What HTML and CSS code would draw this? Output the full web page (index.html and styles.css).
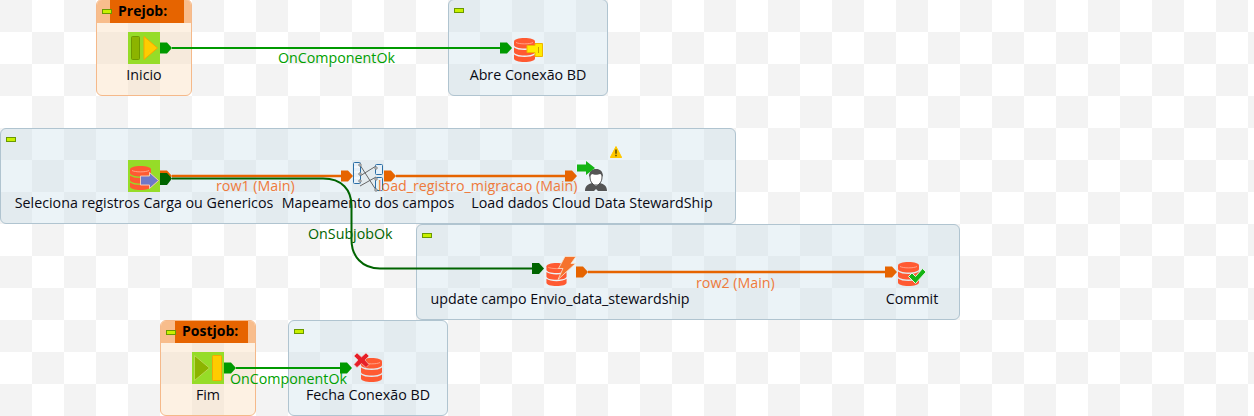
FILE: index.html
```html
<!DOCTYPE html>
<html lang="pt">
<head>
<meta charset="utf-8">
<title>Job</title>
<link rel="stylesheet" href="styles.css">
</head>
<body>
<svg class="defs" width="0" height="0" aria-hidden="true">
  <defs>
    <symbol id="db" viewBox="0 0 21 24">
      <path fill="#ff5a32" d="M0 3.500C0 1.500 4.700 0 10.500 0S21 1.500 21 3.500V7C21 9 16.300 10.500 10.500 10.500S0 9 0 7Z"/>
      <path fill="#ff5a32" d="M0 9.500C2 11.200 6 12 10.500 12S19 11.200 21 9.500V14C21 16 16.300 17.500 10.500 17.500S0 16 0 14Z"/>
      <path fill="#ff5a32" d="M0 16.500C2 18.200 6 19 10.500 19S19 18.200 21 16.500V20.500C21 22.500 16.300 24 10.500 24S0 22.500 0 20.500Z"/>
      <path fill="none" stroke="#ffb49c" stroke-width=".8" d="M2 4.500C5 6.300 16 6.300 19 4.500"/>
    </symbol>
  </defs>
</svg>
<main class="canvas">
  <section class="subjob subjob-special sj-prejob">
    <header class="sj-head"><span class="toggle"></span><span class="sj-title sj-title-pre">Prejob:</span></header>
  </section>
  <section class="subjob sj-abre"><span class="toggle"></span></section>
  <section class="subjob sj-load"><span class="toggle"></span></section>
  <section class="subjob sj-update"><span class="toggle"></span></section>
  <section class="subjob subjob-special sj-postjob">
    <header class="sj-head"><span class="toggle"></span><span class="sj-title sj-title-post">Postjob:</span></header>
  </section>
  <section class="subjob sj-fecha"><span class="toggle"></span></section>

  <div class="node n-inicio">
    <svg class="icon" viewBox="0 0 32 32"><rect width="32" height="32" fill="#96dc28"/><rect x="3.500" y="4.500" width="8" height="23" rx="1" fill="#8cb400" stroke="#6f9a00"/><path d="M16 4.500 29.500 16 16 27.500Z" fill="#ffcc00" stroke="#f5a800" stroke-linejoin="round"/></svg>
    <span class="label">Inicio</span>
  </div>
  <div class="node n-abre">
    <svg class="icon" viewBox="0 0 32 32"><use href="#db" x="2" y="6" width="21" height="24"/><path d="M15 13.500h8v-2h7.500v13H23v-4h-8Z" fill="#ffec00" stroke="#f0b400"/><path d="M26.500 15v6" stroke="#c8a000"/></svg>
    <span class="label">Abre Conexão BD</span>
  </div>
  <div class="node n-seleciona">
    <svg class="icon" viewBox="0 0 32 32"><rect width="32" height="32" fill="#96dc28"/><use href="#db" x="2" y="6" width="21" height="24"/><path d="M12.500 16h9v-3.500l9 8-9 8V25h-9Z" fill="#6e78c8" stroke="#f5c8b4"/></svg>
    <span class="label">Seleciona registros Carga ou Genericos</span>
  </div>
  <div class="node n-mapper">
    <svg class="icon" viewBox="0 0 32 32"><g fill="none" stroke="#666" stroke-width="1"><path d="M8 5 24 30M8 16 24 6M8 26 24 17"/></g><rect x="1.500" y="2.500" width="7" height="21" rx="1" fill="#e6f0f8" stroke="#2a6ea6"/><path d="M2 7h6M2 12h6M2 18h6" stroke="#fff"/><rect x="23.500" y="4.500" width="7" height="10" rx="1" fill="#e6f0f8" stroke="#2a6ea6"/><rect x="23.500" y="17.500" width="7" height="13" rx="1" fill="#e6f0f8" stroke="#2a6ea6"/><g fill="#fff" stroke="#777"><circle cx="8" cy="5" r="1.200"/><circle cx="8" cy="14" r="1.200"/><circle cx="8" cy="21" r="1.200"/><circle cx="24" cy="8" r="1.200"/><circle cx="24" cy="19" r="1.200"/><circle cx="24" cy="30" r="1.200"/></g></svg>
    <span class="label">Mapeamento dos campos</span>
  </div>
  <div class="node n-cloud">
    <svg class="icon" viewBox="0 0 32 32"><path d="M9 31c0-5 3-7 7-8l4 3 4-3c4 1 7 3 7 8H22l-2-2-2 2Z" fill="#555"/><path d="M14 17c0-5 2-7 6-7s6 2 6 7c0 3-1 5-2 6l-2 2h-4l-2-2c-1-1-2-3-2-6Z" fill="#fff" stroke="#555"/><path d="M13 17c0-6 3-8 7-8s7 2 7 8c-1-1-2-3-3-3-2 1-6 1-8 0-1 1-2 2-3 3Z" fill="#555"/><path d="M1 4.500h9V1l9 7-9 7v-3.500H1Z" fill="#14b414"/></svg>
    <span class="label">Load dados Cloud Data StewardShip</span>
    <svg class="warn" viewBox="0 0 12 12"><path d="M6 .500 11.700 11.500H.300Z" fill="#ffc800" stroke="#ffc800" stroke-linejoin="round"/><path d="M6 3.500v4.200M6 8.800v1.400" stroke="#5a4600" stroke-width="1.500"/></svg>
  </div>
  <div class="node n-update">
    <svg class="icon" viewBox="0 0 32 32"><use href="#db" x="2" y="7" width="21" height="23"/><path d="M21 .500H32L27 7.500h4.500L14 23.500 19 12.500H14.500Z" fill="#f5732d" stroke="#f5e6d2" stroke-width=".8"/></svg>
    <span class="label">update campo Envio_data_stewardship</span>
  </div>
  <div class="node n-commit">
    <svg class="icon" viewBox="0 0 32 32"><use href="#db" x="2" y="6" width="21" height="24"/><path d="M12.500 20.500l3.500-3.500 3.500 3.500 7-8 3.500 3.500-10.500 11.500Z" fill="#14b414" stroke="#e6f5e6"/></svg>
    <span class="label">Commit</span>
  </div>
  <div class="node n-fim">
    <svg class="icon" viewBox="0 0 32 32"><rect width="32" height="32" fill="#96dc28"/><path d="M2.500 3.500 17.500 16 2.500 28.500Z" fill="#8cb400" stroke="#b8d850" stroke-linejoin="round"/><rect x="20.500" y="3.500" width="9" height="25" rx="1" fill="#ffcc00" stroke="#f5a800"/></svg>
    <span class="label">Fim</span>
  </div>
  <div class="node n-fecha">
    <svg class="icon" viewBox="0 0 32 32"><use href="#db" x="9" y="6" width="21" height="24"/><path d="M5 1 9.500 5 14 1l3 3-4 4 4 4.500-3 3L9.500 11.500 5 15.500l-3-3L6 8 2 4Z" fill="#e61e28" stroke="#f5d2c8" stroke-width=".6"/></svg>
    <span class="label">Fecha Conexão BD</span>
  </div>

  <svg class="links" width="1254" height="416" viewBox="0 0 1254 416">
    <g class="link-ok">
      <path class="wire" d="M172 48H500"/>
      <path class="tip" d="M160 42.500h7l5 5.500-5 5.500h-7Z"/>
      <path class="tip" d="M500 42.500h7l5 5.500-5 5.500h-7Z"/>
      <path class="wire" d="M236 368H340"/>
      <path class="tip" d="M224 362.500h7l5 5.500-5 5.500h-7Z"/>
      <path class="tip" d="M340 362.500h7l5 5.500-5 5.500h-7Z"/>
    </g>
    <g class="link-row">
      <path class="wire" d="M172 176H341"/>
      <path class="tip" d="M160 170.500h7l5 5.500-5 5.500h-7Z"/>
      <path class="tip" d="M341 170.500h7l5 5.500-5 5.500h-7Z"/>
      <path class="wire" d="M396 176H565"/>
      <path class="tip" d="M384 170.500h7l5 5.500-5 5.500h-7Z"/>
      <path class="tip" d="M565 170.500h7l5 5.500-5 5.500h-7Z"/>
      <path class="wire" d="M588 272H885"/>
      <path class="tip" d="M576 266.500h7l5 5.500-5 5.500h-7Z"/>
      <path class="tip" d="M885 266.500h7l5 5.500-5 5.500h-7Z"/>
    </g>
    <g class="link-subjob">
      <path class="wire" d="M172 178.500H323C342 178.500 351.500 190 351.500 206V240C351.500 256 362 268.500 380 268.500H532"/>
      <path class="tip" d="M160 173h7l5 5.500-5 6.500h-7Z"/>
      <path class="tip" d="M532 263h7l5 5.500-5 5.500h-7Z"/>
    </g>
  </svg>

  <span class="conn conn-ok c-ok1">OnComponentOk</span>
  <span class="conn conn-row c-row1">row1 (Main)</span>
  <span class="conn conn-row c-load">load_registro_migracao (Main)</span>
  <span class="conn conn-sub c-sub">OnSubjobOk</span>
  <span class="conn conn-row c-row2">row2 (Main)</span>
  <span class="conn conn-ok c-ok2">OnComponentOk</span>
</main>
</body>
</html>
```

FILE: styles.css
```css
* { box-sizing: border-box; }
html, body { margin: 0; padding: 0; height: 100%; overflow: hidden; }
body { font-family: "Open Sans", "Noto Sans", sans-serif; font-size: 14.25px; color: #0a0a14; }
.defs { position: absolute; }

.canvas {
  position: relative;
  width: 1254px;
  height: 416px;
  overflow: hidden;
  background: conic-gradient(#fff 25%, #f3f3f3 0 50%, #fff 0 75%, #f3f3f3 0) 0 0 / 64px 64px;
}

.subjob {
  position: absolute;
  border: 1px solid #b0c4d0;
  border-radius: 6px;
  background: rgba(201, 222, 233, .37);
}
.subjob > .toggle { position: absolute; left: 5px; top: 8px; }
.subjob-special { border-color: #f5b98a; background: rgba(250, 220, 185, .4); }

.sj-prejob  { left: 96px;  top: -1px;  width: 96px;  height: 97px; }
.sj-abre    { left: 448px; top: -1px;  width: 160px; height: 97px; }
.sj-load    { left: 0;     top: 128px; width: 736px; height: 96px; }
.sj-update  { left: 416px; top: 224px; width: 544px; height: 96px; }
.sj-postjob { left: 160px; top: 320px; width: 96px;  height: 96px; }
.sj-fecha   { left: 288px; top: 320px; width: 160px; height: 96px; }

.sj-head {
  position: relative;
  display: flex;
  justify-content: center;
  height: 22px;
  border-radius: 5px 5px 0 0;
  background: #f8bd8c;
}
.sj-prejob .sj-head { height: 23px; }
.sj-title {
  height: 100%;
  background: #e66400;
  color: #000;
  font-weight: 700;
  font-size: 14px;
  line-height: 20px;
}
.sj-title-pre { margin-left: 13px; width: 74px; margin-right: 7px; padding-left: 8px; line-height: 22px; }
.sj-title-post { margin-left: 14px; width: 73px; margin-right: 7px; padding-left: 7px; }
.toggle { width: 10px; height: 5px; background: #c8f000; border: 1px solid #6a9a00; }
.sj-head .toggle { position: absolute; left: 5px; top: 9px; }

.node {
  position: absolute;
  width: 320px;
  display: flex;
  flex-direction: column;
  align-items: center;
}
.icon { display: block; width: 32px; height: 32px; overflow: visible; }
.label { display: block; margin-top: 2px; line-height: 18px; white-space: nowrap; }
.warn { position: absolute; left: 178px; top: -14px; width: 12px; height: 12px; }

.n-inicio    { left: -16px; top: 32px; }
.n-abre      { left: 368px; top: 32px; }
.n-seleciona { left: -16px; top: 160px; }
.n-mapper    { left: 208px; top: 160px; }
.n-cloud     { left: 432px; top: 160px; }
.n-update    { left: 400px; top: 256px; }
.n-commit    { left: 752px; top: 256px; }
.n-fim       { left: 48px;  top: 352px; }
.n-fecha     { left: 208px; top: 352px; }

.links { position: absolute; left: 0; top: 0; pointer-events: none; }
.wire { fill: none; stroke-width: 2; }
.link-ok .wire { stroke: #009900; }
.link-ok .tip { fill: #009900; }
.link-row .wire { stroke: #e66400; stroke-width: 2.5; }
.link-row .tip { fill: #e66400; }
.link-subjob .wire { stroke: #006400; }
.link-subjob .tip { fill: #006400; }

.conn { position: absolute; line-height: 18px; white-space: nowrap; }
.conn-ok { color: #00a000; }
.conn-row { color: #ee7a3c; }
.conn-sub { color: #006400; }
.c-ok1  { left: 278px; top: 49px; }
.c-row1 { left: 216px; top: 177px; }
.c-load { left: 378px; top: 177px; }
.c-sub  { left: 308px; top: 225px; }
.c-row2 { left: 696px; top: 274px; }
.c-ok2  { left: 230px; top: 370px; }
```
